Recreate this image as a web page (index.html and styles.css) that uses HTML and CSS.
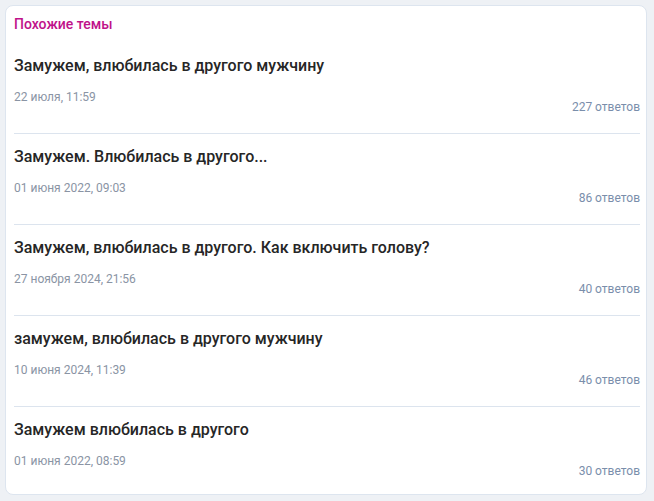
FILE: index.html
```html
<!DOCTYPE html>
<html lang="ru">
<head>
<meta charset="utf-8">
<link rel="stylesheet" href="styles.css">
</head>
<body>
<section class="card">
  <h2 class="card-title">Похожие темы</h2>
  <ul class="topics">
    <li class="topic">
      <a class="topic-title">Замужем, влюбилась в другого мужчину</a>
      <div class="topic-meta">
        <span class="topic-date">22 июля, 11:59</span>
        <span class="topic-count">227 ответов</span>
      </div>
    </li>
    <li class="topic">
      <a class="topic-title">Замужем. Влюбилась в другого...</a>
      <div class="topic-meta">
        <span class="topic-date">01 июня 2022, 09:03</span>
        <span class="topic-count">86 ответов</span>
      </div>
    </li>
    <li class="topic">
      <a class="topic-title">Замужем, влюбилась в другого. Как включить голову?</a>
      <div class="topic-meta">
        <span class="topic-date">27 ноября 2024, 21:56</span>
        <span class="topic-count">40 ответов</span>
      </div>
    </li>
    <li class="topic">
      <a class="topic-title">замужем, влюбилась в другого мужчину</a>
      <div class="topic-meta">
        <span class="topic-date">10 июня 2024, 11:39</span>
        <span class="topic-count">46 ответов</span>
      </div>
    </li>
    <li class="topic">
      <a class="topic-title">Замужем влюбилась в другого</a>
      <div class="topic-meta">
        <span class="topic-date">01 июня 2022, 08:59</span>
        <span class="topic-count">30 ответов</span>
      </div>
    </li>
  </ul>
</section>
</body>
</html>
```

FILE: styles.css
```css
html, body {
  margin: 0;
  padding: 0;
  background: #eef1f5;
}
body {
  padding: 5px 7px 5px 5px;
  font-family: Roboto, "Liberation Sans", Arial, sans-serif;
}
.card {
  background: #fff;
  border: 1px solid #dde5ef;
  border-radius: 8px;
  padding: 9px 6px 0 8px;
  height: 490px;
  box-sizing: border-box;
}
.card-title {
  margin: 0 0 10px;
  font-size: 14px;
  line-height: 18px;
  font-weight: 500;
  color: #bf128a;
}
.topics {
  list-style: none;
  margin: 0;
  padding: 0;
}
.topic {
  padding: 13px 0 18px;
  border-bottom: 1px solid #dce4ee;
}
.topic:last-child {
  border-bottom: none;
  padding-bottom: 0;
}
.topic-title {
  display: block;
  font-size: 16px;
  line-height: 20px;
  font-weight: 500;
  color: #262626;
  text-decoration: none;
}
.topic-meta {
  display: flex;
  justify-content: space-between;
  align-items: flex-start;
  margin-top: 13px;
  font-size: 12px;
  line-height: 16px;
}
.topic-date {
  color: #8a94a4;
}
.topic-count {
  margin-top: 10px;
  color: #7a8eab;
}
```
